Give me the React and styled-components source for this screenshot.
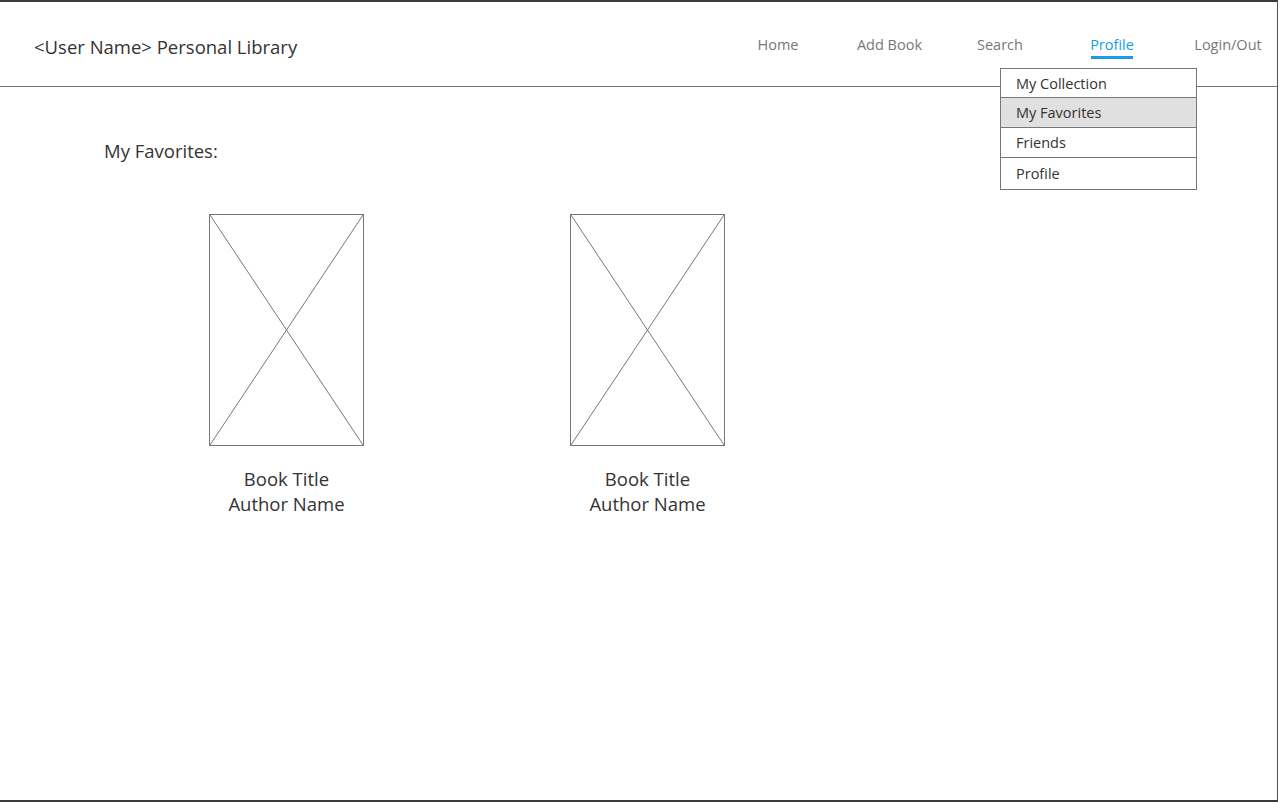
import React from "react";
import styled, { createGlobalStyle } from "styled-components";

const GlobalStyle = createGlobalStyle`
  html, body {
    margin: 0;
    padding: 0;
    background: #fff;
  }
  body {
    font-family: "Open Sans", "Noto Sans", "DejaVu Sans", sans-serif;
    color: #333;
  }
`;

const navItems = [
  { label: "Home", width: 112 },
  { label: "Add Book", width: 111 },
  { label: "Search", width: 110 },
  { label: "Profile", width: 114, active: true },
  { label: "Login/Out", width: 118 },
];

const menuItems = [
  { label: "My Collection" },
  { label: "My Favorites", selected: true },
  { label: "Friends" },
  { label: "Profile" },
];

const books = [
  { title: "Book Title", author: "Author Name" },
  { title: "Book Title", author: "Author Name" },
];

const Cover = () => (
  <CoverBox>
    <svg width="100%" height="100%" viewBox="0 0 100 100" preserveAspectRatio="none">
      <line x1="0" y1="0" x2="100" y2="100" stroke="#777" strokeWidth="1" vectorEffect="non-scaling-stroke" />
      <line x1="100" y1="0" x2="0" y2="100" stroke="#777" strokeWidth="1" vectorEffect="non-scaling-stroke" />
    </svg>
  </CoverBox>
);

const App = () => {
  return (
    <>
      <GlobalStyle />
      <Frame>
        <Header>
          <Title>&lt;User Name&gt; Personal Library</Title>
          <Nav>
            {navItems.map((item) => (
              <NavItem key={item.label} $width={item.width}>
                <NavLink $active={item.active}>{item.label}</NavLink>
              </NavItem>
            ))}
          </Nav>
        </Header>

        <Dropdown>
          {menuItems.map((item) => (
            <MenuRow key={item.label} $selected={item.selected}>
              {item.label}
            </MenuRow>
          ))}
        </Dropdown>

        <Main>
          <SectionTitle>My Favorites:</SectionTitle>
          <BookGrid>
            {books.map((book, i) => (
              <BookCard key={i}>
                <Cover />
                <BookText>
                  {book.title}
                  <br />
                  {book.author}
                </BookText>
              </BookCard>
            ))}
          </BookGrid>
        </Main>
      </Frame>
    </>
  );
};

export default App;

const Frame = styled.div`
  position: relative;
  box-sizing: border-box;
  width: 1278px;
  height: 802px;
  border-top: 2px solid #3a3a3a;
  border-bottom: 2px solid #3a3a3a;
  border-right: 1px solid #555;
  overflow: hidden;
`;

const Header = styled.header`
  display: flex;
  align-items: flex-start;
  box-sizing: border-box;
  height: 85px;
  padding: 33px 0 0 34px;
  border-bottom: 1px solid #777;
`;

const Title = styled.div`
  font-size: 18.5px;
  line-height: 24px;
  color: #333;
  white-space: nowrap;
`;

const Nav = styled.nav`
  display: flex;
  margin-left: auto;
  margin-right: -10px;
`;

const NavItem = styled.div`
  width: ${(p) => p.$width}px;
  display: flex;
  justify-content: center;
`;

const NavLink = styled.span`
  display: inline-block;
  font-size: 14.5px;
  line-height: 20px;
  color: ${(p) => (p.$active ? "#1a9be3" : "#777")};
  white-space: nowrap;
  &::after {
    content: "";
    display: block;
    height: 3px;
    margin: 1px 1px 0;
    background: ${(p) => (p.$active ? "#1a9be3" : "transparent")};
  }
`;

const Dropdown = styled.div`
  position: absolute;
  left: 1000px;
  top: 66px;
  width: 197px;
  box-sizing: border-box;
  border: 1px solid #777;
  background: #fff;
`;

const MenuRow = styled.div`
  box-sizing: border-box;
  height: 30px;
  padding-left: 15px;
  display: flex;
  align-items: center;
  font-size: 14.5px;
  color: #333;
  background: ${(p) => (p.$selected ? "#e0e0e0" : "#fff")};
  & + & {
    border-top: 1px solid #777;
  }
  &:first-child {
    height: 28px;
  }
  &:last-child {
    height: 32px;
  }
`;

const Main = styled.main`
  padding: 52px 0 0 104px;
`;

const SectionTitle = styled.h2`
  margin: 0;
  font-size: 18.5px;
  font-weight: 400;
  line-height: 24px;
  color: #333;
`;

const BookGrid = styled.div`
  display: flex;
  gap: 206px;
  margin-top: 51px;
  padding-left: 105px;
`;

const BookCard = styled.div`
  width: 155px;
  display: flex;
  flex-direction: column;
  align-items: center;
`;

const CoverBox = styled.div`
  box-sizing: border-box;
  width: 155px;
  height: 232px;
  border: 1px solid #777;
  svg {
    display: block;
  }
`;

const BookText = styled.div`
  margin-top: 20px;
  font-size: 18.5px;
  line-height: 25px;
  text-align: center;
  color: #333;
  white-space: nowrap;
`;
